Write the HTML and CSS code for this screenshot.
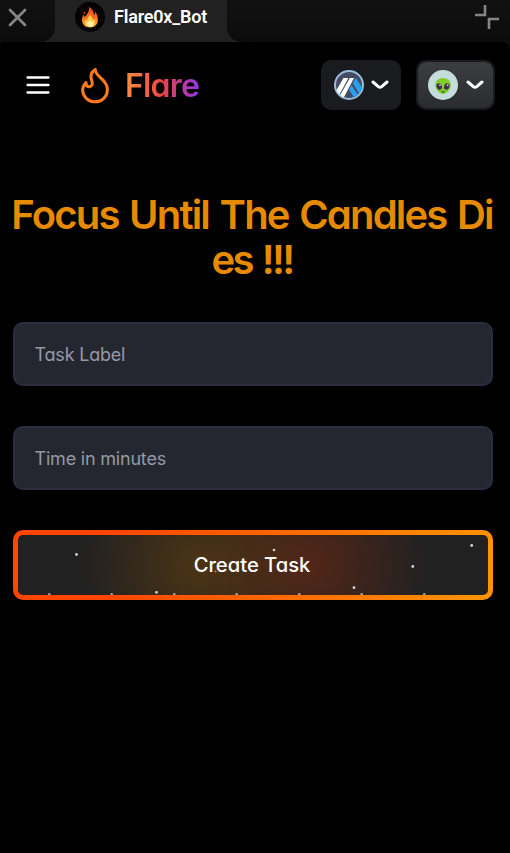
FILE: index.html
```html
<!DOCTYPE html>
<html lang="en">
<head>
    <meta charset="UTF-8">
    <meta name="viewport" content="width=device-width, initial-scale=1.0">
    <title>Flare0x_Bot</title>
    <link rel="stylesheet" href="styles.css">
</head>
<body>

    <div class="tab-bar">
        <svg class="close-icon" width="20" height="20" viewBox="0 0 20 20">
            <path d="M2 3 17 18M17 3 2 18"/>
        </svg>
        <div class="tab">
            <svg width="30" height="30" viewBox="0 0 30 30">
                <defs>
                    <linearGradient id="fire" x1="0" y1="0" x2="0" y2="1">
                        <stop offset="0" stop-color="#e8431c"/>
                        <stop offset="0.5" stop-color="#fb6a1e"/>
                        <stop offset="1" stop-color="#ffb52e"/>
                    </linearGradient>
                </defs>
                <circle cx="15" cy="15" r="15" fill="#050304"/>
                <path fill="url(#fire)" d="M14 5c4 2 4.500 5 5 8 1-.8 1.200-2 .9-3.500 2 2 3.300 5.500 3 9-.4 4-3.200 7-7.700 7-4.700 0-8-2.800-8.200-7-.1-2.500.8-4.300 1.200-6 .7.700 1 1.500 1.200 2.500C12.500 12.500 14.500 9 14 5z"/>
                <path fill="#ffd052" d="M15 11.500c.3 3 3 4.500 3.400 7 .8-.4 1.200-1 1.400-1.800 1.200 3.500-.2 8-4.600 8s-6.300-4-4.800-7.500c.4.900.8 1.200 1.500 1.400C12.200 16 14.600 14.500 15 11.500z"/>
                <ellipse cx="15.200" cy="22" rx="3.200" ry="2.600" fill="#fff0ae"/>
                <circle cx="9.500" cy="11" r=".9" fill="#e8431c"/>
            </svg>
            <span class="tab-title">Flare0x_Bot</span>
        </div>
        <svg class="shrink-icon" width="26" height="26" viewBox="0 0 26 26">
            <path d="M11 1v10H1M25 15H15v10"/>
        </svg>
    </div>

    <div class="app">
        <header class="navbar">
            <svg class="menu-icon" width="24" height="20" viewBox="0 0 24 20">
                <path d="M1.500 2.500h21M1.500 10h21M1.500 17.500h21"/>
            </svg>
            <svg class="logo-icon" width="30" height="38" viewBox="0 0 30 38">
                <path d="M15.300 3.500C11.500 6 10.200 9.500 11.300 13c1.200 3.500 1.800 6.600-1.300 7.600-2.500.7-4.200-1.300-4-4.100C4 19 2.600 21.500 2.600 24c.2 6.500 5.400 11.800 12.400 11.800S27.400 30.500 27.400 24c0-5.500-2.700-8.400-5.800-11.300C18.300 9.800 15.600 8 15.300 3.500z"/>
            </svg>
            <span class="brand">Flare</span>

            <button class="picker network">
                <svg width="30" height="30" viewBox="0 0 30 30">
                    <defs>
                        <clipPath id="coin"><circle cx="15" cy="15" r="13.500"/></clipPath>
                    </defs>
                    <circle cx="15" cy="15" r="14" fill="#454b60"/>
                    <circle cx="15" cy="15" r="14" fill="none" stroke="#96bedc" stroke-width="2"/>
                    <g clip-path="url(#coin)">
                        <path fill="#fff" d="M9.500 8h4.800L4.500 26.500l-4-3zM15.800 8h4.200L8.500 30l-4.500-1z"/>
                        <path fill="#28a0f0" d="M15 19.500 17.500 15l7.500 12-4 2zM18.800 13l3-5L31 22l-4 5z"/>
                    </g>
                </svg>
                <svg class="chevron" width="18" height="10" viewBox="0 0 18 10"><path d="M2 2l5.300 4.600q1.700 1.300 3.400 0L16 2"/></svg>
            </button>
            <button class="picker account">
                <svg width="30" height="30" viewBox="0 0 30 30">
                    <circle cx="15" cy="15" r="15" fill="#c5dcdd"/>
                    <path fill="#83cd29" d="M15 8c4.800 0 7.800 2.900 7.800 7 0 4.500-4.400 9-7.800 9s-7.800-4.500-7.800-9c0-4.100 3-7 7.800-7z"/>
                    <ellipse cx="11.200" cy="16.500" rx="2.600" ry="3.300" fill="#402e4d" transform="rotate(-22 11.200 16.500)"/>
                    <ellipse cx="18.800" cy="16.500" rx="2.600" ry="3.300" fill="#402e4d" transform="rotate(22 18.800 16.500)"/>
                    <circle cx="12" cy="15.200" r=".9" fill="#d9c9e6"/>
                    <circle cx="19.600" cy="15.200" r=".9" fill="#d9c9e6"/>
                    <path d="M13.300 21.700q1.700.8 3.400 0" fill="none" stroke="#2c4a16"/>
                </svg>
                <svg class="chevron" width="18" height="10" viewBox="0 0 18 10"><path d="M2 2l5.300 4.600q1.700 1.300 3.400 0L16 2"/></svg>
            </button>
        </header>

        <main>
            <h1>Focus Until The Candles Di<br><span class="line-two">es !!!</span></h1>
            <form>
                <input class="label-input" type="text" placeholder="Task Label">
                <input class="time-input" type="text" placeholder="Time in minutes">
                <button type="button" class="create-btn">
                    <svg class="stars" width="470" height="60" viewBox="0 0 470 60">
                        <g fill="#fff" fill-opacity=".8">
                            <circle cx="58.500" cy="19.500" r="1.400"/>
                            <circle cx="138.500" cy="57.300" r="1.400"/>
                            <circle cx="256" cy="15" r="1.300"/>
                            <circle cx="336" cy="52.700" r="1.400"/>
                            <circle cx="394.800" cy="31.500" r="1.400"/>
                            <circle cx="453.700" cy="10.500" r="1.400"/>
                            <circle cx="197.500" cy="36.500" r="1" fill="#d9a577"/>
                        </g>
                        <g fill="#fff" fill-opacity=".55">
                            <circle cx="31.300" cy="59.500" r="1.400"/>
                            <circle cx="93.700" cy="59.500" r="1.400"/>
                            <circle cx="156.300" cy="59.500" r="1.400"/>
                            <circle cx="218.700" cy="59.500" r="1.400"/>
                            <circle cx="281.300" cy="59.500" r="1.400"/>
                            <circle cx="343.700" cy="59.500" r="1.400"/>
                            <circle cx="406.300" cy="59.500" r="1.400"/>
                        </g>
                    </svg>
                    <span class="create-text">Create Task</span>
                </button>
            </form>
        </main>
    </div>

</body>
</html>
```

FILE: styles.css
```css
* {
    box-sizing: border-box;
}

body {
    margin: 0;
    height: 853px;
    background: #0f0f0f;
    font-family: Inter, sans-serif;
    font-feature-settings: "cv11";
    overflow: hidden;
}

svg {
    display: block;
    flex: none;
}

/* browser tab strip */
.tab-bar {
    display: flex;
    height: 42px;
    background: linear-gradient(#111, #0c0c0c);
}

.close-icon {
    margin: 7px 0 0 8px;
    fill: none;
    stroke: #858585;
    stroke-width: 2.8;
    stroke-linecap: round;
}

.tab {
    position: relative;
    display: flex;
    width: 172px;
    height: 42px;
    margin-left: 27px;
    padding: 2px 0 0 20px;
    background: #212121;
}

.tab::before,
.tab::after {
    content: "";
    position: absolute;
    bottom: 0;
    width: 14px;
    height: 14px;
}

.tab::before {
    left: -14px;
    background: radial-gradient(circle at 0 0, transparent 13.5px, #212121 14px);
}

.tab::after {
    right: -14px;
    background: radial-gradient(circle at 100% 0, transparent 13.5px, #212121 14px);
}

.tab-title {
    margin-left: 9px;
    font: 600 18px/30px Roboto, sans-serif;
    letter-spacing: -0.2px;
    color: #fff;
}

.shrink-icon {
    margin: 4px 10px 0 auto;
    fill: none;
    stroke: #858585;
    stroke-width: 2.6;
}

.app {
    height: 811px;
    background: #000;
    border-radius: 4px 8px 0 0;
}

.navbar {
    display: flex;
    align-items: center;
    height: 86px;
    padding: 0 15px 0 26px;
}

.menu-icon {
    stroke: #fff;
    stroke-width: 2.3;
    stroke-linecap: round;
}

.logo-icon {
    margin-left: 30px;
    fill: none;
    stroke: #ff7a1a;
    stroke-width: 3;
    stroke-linejoin: round;
}

.brand {
    margin-left: 14px;
    padding-left: 1px;
    font-size: 32px;
    font-weight: 600;
    letter-spacing: -0.8px;
    color: transparent;
    background: linear-gradient(to right, #fb923c, #ef4444 50%, #9333ea);
    -webkit-background-clip: text;
    background-clip: text;
}

.picker {
    display: flex;
    align-items: center;
    gap: 6px;
    height: 50px;
    border: none;
    border-radius: 10px;
}

.network {
    width: 80px;
    margin-left: auto;
    padding: 0 0 0 13px;
    background: #1a1b1f;
}

.account {
    width: 79px;
    margin-left: 15px;
    padding: 0 0 0 10px;
    border: 2px solid #1a1b1f;
    background: linear-gradient(#3c3d41, #2b2c30) padding-box;
}

.chevron {
    margin-left: 1px;
    fill: none;
    stroke: #fff;
    stroke-width: 3;
    stroke-linecap: round;
}

.account .chevron {
    margin-left: 2px;
}

main {
    padding: 64px 17px 0 13px;
}

h1 {
    margin: 0 -9px 0 -11px;
    font-size: 40px;
    font-weight: 600;
    line-height: 45px;
    letter-spacing: -1.8px;
    word-spacing: 2.2px;
    text-align: center;
    white-space: nowrap;
    color: #e68a00;
}

.line-two {
    letter-spacing: -2.6px;
}

form {
    display: flex;
    flex-direction: column;
    gap: 40px;
    margin-top: 40px;
}

input {
    height: 64px;
    padding: 0 19.5px;
    border: 2px solid #2a2e3f;
    border-radius: 10px;
    background: #242730;
    font-family: inherit;
    font-feature-settings: inherit;
    font-size: 18px;
    letter-spacing: -0.2px;
    color: #fff;
}

input::placeholder {
    color: #9499a6;
}

.create-btn {
    position: relative;
    height: 70px;
    padding: 0 0 1px;
    border: 5px solid transparent;
    border-radius: 10px;
    background:
        radial-gradient(ellipse 115px 110px at 178px 30px, rgba(92, 60, 15, 0.7), transparent) padding-box,
        radial-gradient(ellipse 120px 110px at 290px 30px, rgba(100, 40, 20, 0.75), transparent) padding-box,
        linear-gradient(#212121, #212121) padding-box,
        linear-gradient(100deg, #ff4500 20%, #ff9500) border-box;
    font-family: inherit;
    font-feature-settings: inherit;
    font-size: 20.2px;
    font-weight: 500;
    color: #fff;
}

.stars {
    position: absolute;
    inset: 0;
}

.create-text {
    position: relative;
    right: 1px;
}
```
